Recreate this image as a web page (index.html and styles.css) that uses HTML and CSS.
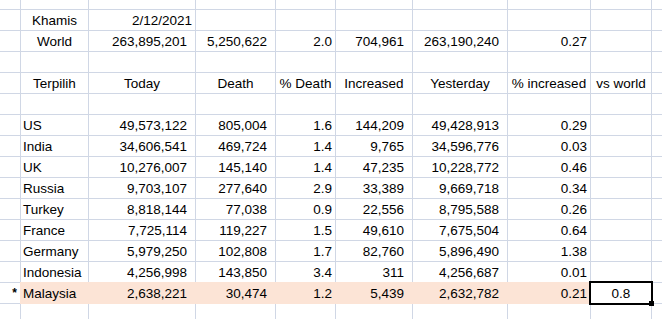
FILE: index.html
```html
<!DOCTYPE html>
<html lang="ms">
<head>
<meta charset="utf-8">
<title>Sheet</title>
<link rel="stylesheet" href="styles.css">
</head>
<body>
<div class="sheet">
  <div class="row top"><div class="c"></div><div class="c"></div><div class="c"></div><div class="c"></div><div class="c"></div><div class="c"></div><div class="c"></div><div class="c"></div><div class="c"></div><div class="c"></div></div>

  <div class="row"><div class="c"></div><div class="c m">Khamis</div><div class="c d">2/12/2021</div><div class="c"></div><div class="c"></div><div class="c"></div><div class="c"></div><div class="c"></div><div class="c"></div><div class="c"></div></div>

  <div class="row"><div class="c"></div><div class="c m">World</div><div class="c r">263,895,201</div><div class="c r">5,250,622</div><div class="c d">2.0</div><div class="c r">704,961</div><div class="c r">263,190,240</div><div class="c d">0.27</div><div class="c"></div><div class="c"></div></div>

  <div class="row"><div class="c"></div><div class="c"></div><div class="c"></div><div class="c"></div><div class="c"></div><div class="c"></div><div class="c"></div><div class="c"></div><div class="c"></div><div class="c"></div></div>

  <div class="row"><div class="c"></div><div class="c m">Terpilih</div><div class="c m">Today</div><div class="c m">Death</div><div class="c m">% Death</div><div class="c m">Increased</div><div class="c m">Yesterday</div><div class="c m">% increased</div><div class="c m">vs world</div><div class="c"></div></div>

  <div class="row"><div class="c"></div><div class="c"></div><div class="c"></div><div class="c"></div><div class="c"></div><div class="c"></div><div class="c"></div><div class="c"></div><div class="c"></div><div class="c"></div></div>

  <div class="row"><div class="c"></div><div class="c l">US</div><div class="c r">49,573,122</div><div class="c r">805,004</div><div class="c d">1.6</div><div class="c r">144,209</div><div class="c r">49,428,913</div><div class="c d">0.29</div><div class="c"></div><div class="c"></div></div>

  <div class="row"><div class="c"></div><div class="c l">India</div><div class="c r">34,606,541</div><div class="c r">469,724</div><div class="c d">1.4</div><div class="c r">9,765</div><div class="c r">34,596,776</div><div class="c d">0.03</div><div class="c"></div><div class="c"></div></div>

  <div class="row"><div class="c"></div><div class="c l">UK</div><div class="c r">10,276,007</div><div class="c r">145,140</div><div class="c d">1.4</div><div class="c r">47,235</div><div class="c r">10,228,772</div><div class="c d">0.46</div><div class="c"></div><div class="c"></div></div>

  <div class="row"><div class="c"></div><div class="c l">Russia</div><div class="c r">9,703,107</div><div class="c r">277,640</div><div class="c d">2.9</div><div class="c r">33,389</div><div class="c r">9,669,718</div><div class="c d">0.34</div><div class="c"></div><div class="c"></div></div>

  <div class="row"><div class="c"></div><div class="c l">Turkey</div><div class="c r">8,818,144</div><div class="c r">77,038</div><div class="c d">0.9</div><div class="c r">22,556</div><div class="c r">8,795,588</div><div class="c d">0.26</div><div class="c"></div><div class="c"></div></div>

  <div class="row"><div class="c"></div><div class="c l">France</div><div class="c r">7,725,114</div><div class="c r">119,227</div><div class="c d">1.5</div><div class="c r">49,610</div><div class="c r">7,675,504</div><div class="c d">0.64</div><div class="c"></div><div class="c"></div></div>

  <div class="row"><div class="c"></div><div class="c l">Germany</div><div class="c r">5,979,250</div><div class="c r">102,808</div><div class="c d">1.7</div><div class="c r">82,760</div><div class="c r">5,896,490</div><div class="c d">1.38</div><div class="c"></div><div class="c"></div></div>

  <div class="row"><div class="c"></div><div class="c l">Indonesia</div><div class="c r">4,256,998</div><div class="c r">143,850</div><div class="c d">3.4</div><div class="c r">311</div><div class="c r">4,256,687</div><div class="c d">0.01</div><div class="c"></div><div class="c"></div></div>

  <div class="row"><div class="c mark">*</div><div class="c l hl">Malaysia</div><div class="c r hl">2,638,221</div><div class="c r hl">30,474</div><div class="c d hl">1.2</div><div class="c r hl">5,439</div><div class="c r hl">2,632,782</div><div class="c d hl">0.21</div><div class="c m sel">0.8</div><div class="c"></div></div>

  <div class="row"><div class="c"></div><div class="c"></div><div class="c"></div><div class="c"></div><div class="c"></div><div class="c"></div><div class="c"></div><div class="c"></div><div class="c"></div><div class="c"></div></div>
</div>
</body>
</html>
```

FILE: styles.css
```css
html, body {
  margin: 0;
  padding: 0;
  background: #ffffff;
  overflow: hidden;
}

body {
  width: 662px;
  height: 319px;
  font-family: "Liberation Sans", Arial, sans-serif;
  font-size: 13.5px;
  color: #000000;
}

.sheet {
  display: grid;
  grid-template-columns: 20px 67px 106px 79px 59px 76px 94px 82px 60px 10px;
  grid-template-rows: 9px repeat(15, 20px);
  gap: 1px;
  background: #d0d7e5;
  width: 662px;
}

.row {
  display: contents;
}

.c {
  background: #ffffff;
  height: 20px;
  box-sizing: border-box;
  padding-top: 1px;
  line-height: 20px;
  white-space: nowrap;
  overflow: hidden;
}

.row.top .c {
  height: 9px;
  padding: 0;
}

.l {
  text-align: left;
  padding-left: 2px;
}

.r {
  text-align: right;
  padding-right: 8px;
}

.d {
  text-align: right;
  padding-right: 3px;
}

.m {
  text-align: center;
  overflow: visible;
}

.mark {
  text-align: right;
  padding-right: 3px;
  font-size: 12px;
  font-weight: bold;
  line-height: 18px;
}

.hl {
  background: #fce4d6;
  box-shadow: 0 0 0 1px #fce4d6;
}

.sel {
  position: relative;
  overflow: visible;
  outline: 2px solid #000000;
}

.sel::after {
  content: "";
  position: absolute;
  right: -3px;
  bottom: -3px;
  width: 5px;
  height: 5px;
  background: #000000;
}
```
